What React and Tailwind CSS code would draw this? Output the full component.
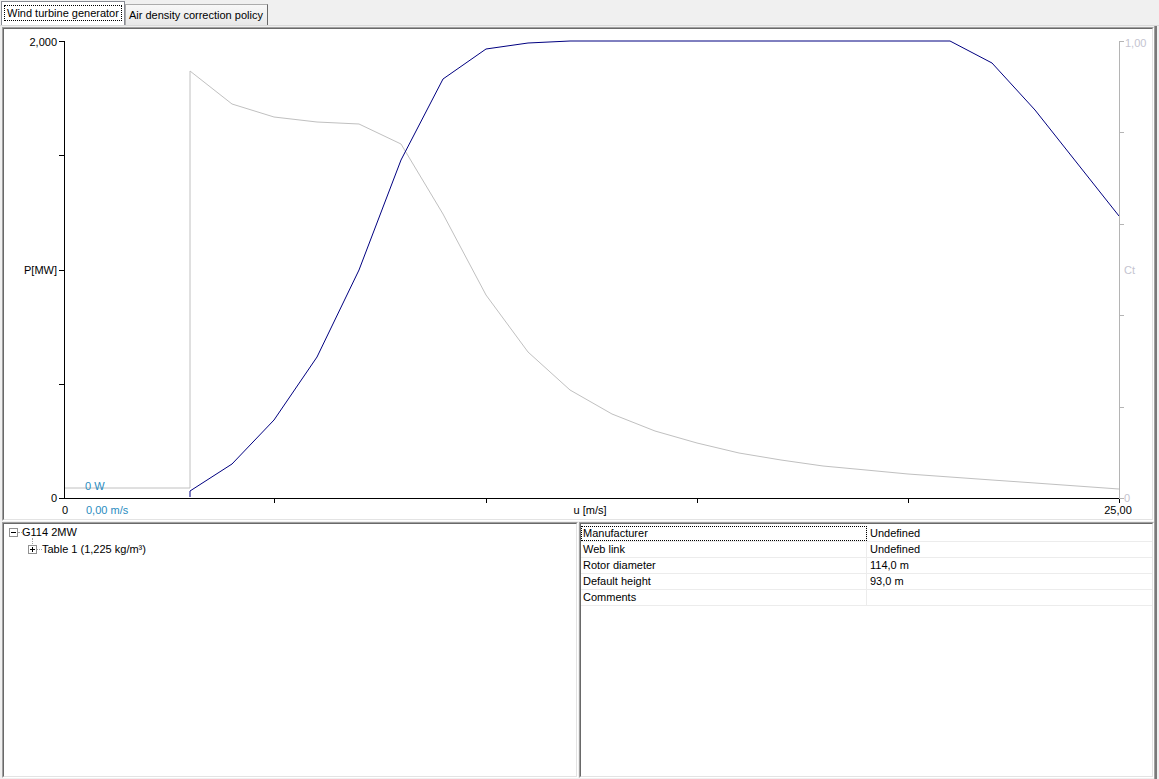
import React from 'react';

const power = [
  [190, 497], [190, 491], [232, 464], [274, 420], [317, 357], [359, 270], [401, 160],
  [443, 79], [486, 49], [528, 43], [570, 41], [950, 41], [992, 63], [1035, 110],
  [1077, 163], [1119, 216],
];

const ct = [
  [190, 71], [232, 104], [274, 117], [317, 122], [359, 124], [401, 144], [443, 214],
  [486, 295], [528, 352], [570, 390], [612, 414], [655, 431], [697, 443], [739, 453],
  [781, 460], [823, 466], [866, 470], [908, 474], [950, 477], [992, 480], [1035, 483],
  [1077, 486], [1119, 489],
];

const pts = (a) => a.map(([x, y]) => `${x},${y}`).join(' ');

function Sunken({ className, children }) {
  return (
    <div className={`border border-t-[#a0a0a0] border-l-[#a0a0a0] border-r-white border-b-white ${className}`}>
      <div className="w-full h-full border border-t-[#696969] border-l-[#696969] border-r-[#e3e3e3] border-b-[#e3e3e3] bg-white overflow-hidden relative">
        {children}
      </div>
    </div>
  );
}

function Chart() {
  const lbl = { fontFamily: '"Liberation Sans", Arial, sans-serif', fontSize: 11 };
  return (
    <svg width="1148" height="490" viewBox="4 29 1148 490" style={lbl}>
      {/* Ct curve */}
      <polyline points={`64,488 190,488 ${pts(ct)}`} fill="none" stroke="#c0c0c0" strokeWidth="1" />
      {/* power */}
      <polyline points={pts(power)} fill="none" stroke="#000080" strokeWidth="1" />
      {/* left axis */}
      <line x1="64.5" y1="41" x2="64.5" y2="499" stroke="#000" />
      {[41, 155, 270, 384, 498].map((y) => (
        <line key={y} x1="59" y1={y + 0.5} x2="64" y2={y + 0.5} stroke="#000" />
      ))}
      {/* bottom axis */}
      <line x1="64" y1="498.5" x2="1120" y2="498.5" stroke="#000" />
      {[274, 486, 697, 908, 1119].map((x) => (
        <line key={x} x1={x + 0.5} y1="498" x2={x + 0.5} y2="503" stroke="#000" />
      ))}
      {/* right axis */}
      <line x1="1119.5" y1="41" x2="1119.5" y2="498" stroke="#b4b4b4" />
      {[41, 132, 224, 315, 407, 498].map((y) => (
        <line key={y} x1="1119" y1={y + 0.5} x2="1124" y2={y + 0.5} stroke="#b4b4b4" />
      ))}
      <text x="57" y="46" textAnchor="end" fill="#000">2,000</text>
      <text x="57" y="274" textAnchor="end" fill="#000">P[MW]</text>
      <text x="57" y="502" textAnchor="end" fill="#000">0</text>
      <text x="1125" y="47" fill="#c4c4d0">1,00</text>
      <text x="1124" y="274" fill="#c4c4d0">Ct</text>
      <text x="1124" y="502" fill="#c4c4d0">0</text>
      <text x="62" y="514" fill="#000">0</text>
      <text x="86" y="514" fill="#2a8cbf">0,00 m/s</text>
      <text x="85" y="490" fill="#2a8cbf">0 W</text>
      <text x="590" y="514" textAnchor="middle" fill="#000">u [m/s]</text>
      <text x="1118" y="514" textAnchor="middle" fill="#000">25,00</text>
    </svg>
  );
}

function TreeBox({ plus }) {
  return (
    <span className="w-[9px] h-[9px] border border-[#919191] bg-white flex items-center justify-center relative shrink-0">
      <span className="absolute w-[5px] h-[1px] bg-black" />
      {plus && <span className="absolute w-[1px] h-[5px] bg-black" />}
    </span>
  );
}

const rows = [
  ['Manufacturer', 'Undefined'],
  ['Web link', 'Undefined'],
  ['Rotor diameter', '114,0 m'],
  ['Default height', '93,0 m'],
  ['Comments', ''],
];

export default function App() {
  return (
    <div className="w-[1159px] h-[779px] bg-[#f0f0f0] flex flex-col text-[11px] text-black overflow-hidden"
      style={{ fontFamily: '"Liberation Sans", Arial, sans-serif' }}>
      {/* tabs */}
      <div className="h-[26px] flex items-end pl-[1px] border-b border-[#d9d9d9]">
        <div className="h-[24px] w-[124px] border border-b-0 border-[#898c95] bg-white flex items-center px-[2px] pb-[1px] relative z-10">
          <span className="w-full h-[16px] border border-dotted border-black flex items-center pl-[2px] leading-none">Wind turbine generator</span>
        </div>
        <div className="h-[21px] w-[143px] border border-b-0 border-[#acacac] border-r-[#696969] bg-gradient-to-b from-[#f8f8f8] to-[#e8e8e8] flex items-center pl-[3px] leading-none">
          Air density correction policy
        </div>
      </div>
      {/* body */}
      <div className="flex-1 flex">
        <div className="w-[1154px] pl-[2px] pt-[1px] flex flex-col gap-[1px]">
          <Sunken className="h-[494px] w-[1152px]">
            <Chart />
          </Sunken>
          <div className="h-[256px] flex gap-[1px]">
            <Sunken className="w-[576px] h-full">
              <div className="pl-[5px]">
                <div className="h-[17px] flex items-center">
                  <TreeBox />
                  <span className="w-[4px] border-t border-dotted border-[#a0a0a0]" />
                  <span>G114 2MW</span>
                </div>
                <div className="h-[17px] flex items-center pl-[19px] relative">
                  <span className="absolute left-[23px] top-[-3px] h-[6px] border-l border-dotted border-[#a0a0a0]" />
                  <TreeBox plus />
                  <span className="w-[5px] border-t border-dotted border-[#a0a0a0]" />
                  <span>Table 1 (1,225 kg/m³)</span>
                </div>
              </div>
            </Sunken>
            <Sunken className="w-[575px] h-full">
              <div className="pt-[2px]">
                {rows.map(([k, v], i) => (
                  <div key={k} className="h-[16px] flex border-b border-[#ececec]">
                    <div className={`w-[286px] pl-[2px] flex items-center border-r border-[#ececec] ${i === 0 ? 'outline outline-1 outline-dotted outline-black -outline-offset-1' : ''}`}>{k}</div>
                    <div className="flex-1 pl-[3px] flex items-center">{v}</div>
                  </div>
                ))}
              </div>
            </Sunken>
          </div>
        </div>
        <div className="w-[3px] bg-[#7a7a7a] border-l border-[#a0a0a0]" />
      </div>
    </div>
  );
}
